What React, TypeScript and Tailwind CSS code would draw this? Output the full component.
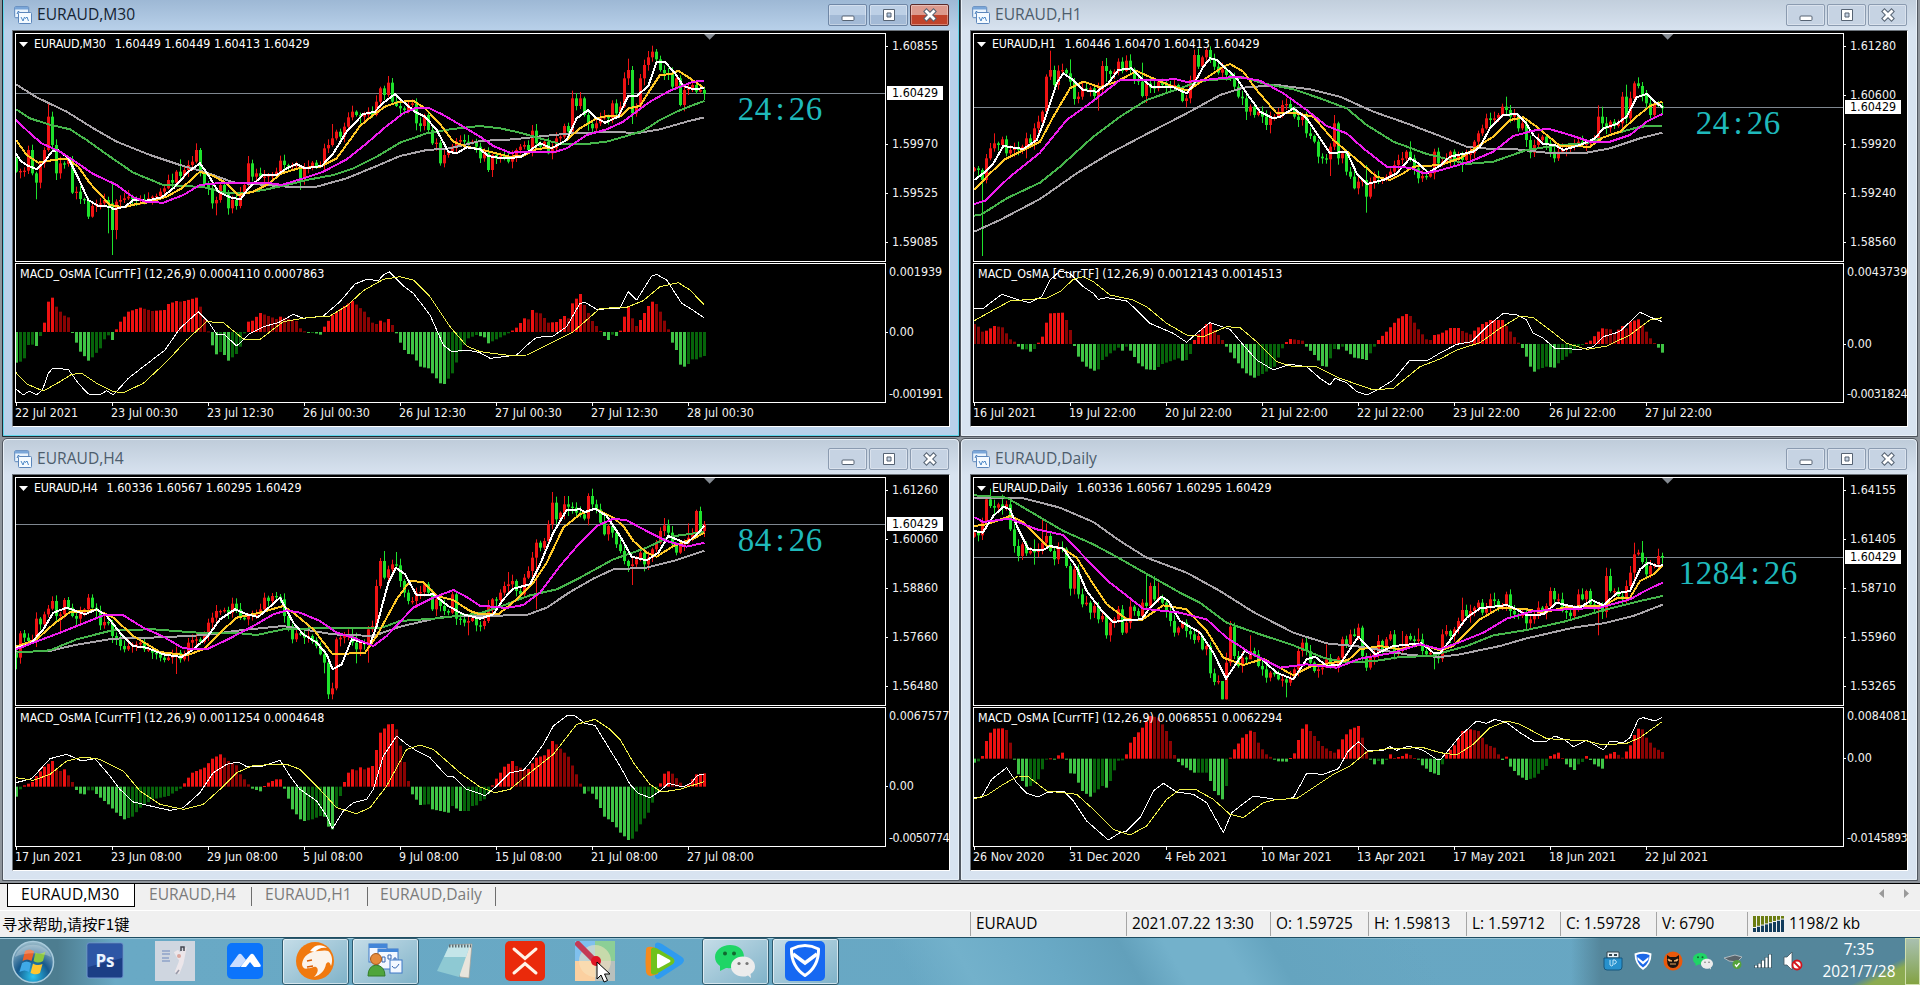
import type { ReactNode } from "react"

type Wick = [number, number, number]

type Chart = {
  symbol: string
  quote: string
  macd: string
  active?: boolean
  // origin of the price pane and of the MACD pane, in thirds of a pixel
  x: number
  y: number
  priceLine: number
  zero: number
  countdown: string
  prices: string[]
  scale: [string, string]
  dates: string[]
  closes: number[]
  open: number
  wicks: Wick[]
  averages: { white: string; gold: string; magenta: string; green: string; gray: string }
  histogram: string
  macdLine: string
  signalLine: string
}

const CHARTS: Chart[] = [
  {
    symbol: "EURAUD,M30",
    quote: "1.60449 1.60449 1.60413 1.60429",
    macd: "0.0004110 0.0007863",
    active: true,
    x: 48,
    y: 102,
    priceLine: 280,
    zero: 996,
    countdown: "24:26",
    prices: ["1.60855", "", "1.59970", "1.59525", "1.59085"],
    scale: ["0.001939", "-0.001991"],
    dates: ["22 Jul 2021", "23 Jul 00:30", "23 Jul 12:30", "26 Jul 00:30", "26 Jul 12:30", "27 Jul 00:30", "27 Jul 12:30", "28 Jul 00:30"],
    open: 475,
    closes: [
      515, 513, 512, 450, 520, 548, 490, 450, 350, 435, 520, 490, 492, 480, 578, 575, 597, 600, 650, 618, 612, 610, 600, 610, 690,
      605, 600, 595, 590, 598, 600, 598, 605, 595, 590, 588, 575, 565, 540, 548, 515, 528, 510, 495, 485, 450, 520, 555, 565, 610,
      600, 555, 580, 625, 600, 618, 580, 555, 490, 530, 520, 530, 530, 525, 525, 515, 482, 495, 500, 495, 495, 535, 505, 500, 488,
      500, 495, 445, 435, 415, 395, 410, 380, 352, 335, 345, 350, 345, 335, 345, 305, 265, 285, 248, 305, 318, 325, 330, 315, 310,
      370, 378, 345, 390, 430, 428, 490, 465, 455, 440, 425, 420, 425, 430, 425, 440, 475, 460, 510, 465, 475, 468, 470, 485, 470,
      450, 440, 435, 450, 392, 430, 440, 425, 460, 445, 415, 410, 378, 395, 295, 318, 295, 345, 372, 385, 370, 355, 350, 355, 310,
      340, 320, 235, 210, 340, 320, 235, 195, 172, 155, 178, 210, 220, 222, 260, 235, 315, 270, 265, 255, 275, 270, 282,
    ],
    wicks: [[5, 515, 598], [8, 312, 455], [9, 335, 450], [23, 590, 700], [24, 545, 765], [25, 598, 718], [41, 478, 545], [45, 430, 490], [50, 590, 646], [58, 468, 560], [71, 495, 570], [79, 372, 440], [93, 228, 292], [106, 420, 497], [139, 272, 385], [153, 176, 255], [154, 198, 372], [159, 137, 185]],
    averages: {
      white: "48,460 62,483 85,498 110,507 130,490 155,455 175,450 205,475 235,535 265,600 295,618 330,620 340,628 375,620 400,600 440,602 485,592 520,565 565,515 600,490 625,525 655,575 690,592 722,598 745,565 790,525 830,525 860,505 890,492 915,505 965,498 1000,460 1040,395 1090,342 1125,335 1150,308 1185,282 1215,310 1245,335 1275,350 1310,390 1345,455 1370,460 1400,442 1440,448 1465,468 1500,474 1560,472 1585,455 1620,430 1655,445 1700,420 1730,355 1765,330 1785,352 1815,368 1855,350 1885,287 1910,288 1945,258 1970,185 1995,186 2025,220 2050,258 2080,268 2112,264",
      gold: "48,420 80,465 115,488 160,480 200,476 235,500 270,550 330,615 370,622 410,612 450,606 500,590 545,565 600,515 640,528 680,550 715,585 760,575 800,555 845,520 895,505 960,500 1010,475 1050,420 1080,378 1120,345 1155,320 1195,306 1240,302 1275,325 1320,372 1360,425 1400,440 1440,448 1490,460 1530,470 1570,468 1610,447 1660,442 1700,420 1740,385 1790,355 1825,347 1860,350 1885,325 1920,318 1950,270 1980,225 2015,222 2035,212 2070,235 2113,265",
      magenta: "48,360 90,400 125,430 180,455 230,488 280,522 350,555 400,592 440,606 490,608 550,585 600,555 650,550 720,550 800,548 845,555 910,535 970,515 1040,478 1100,430 1160,378 1210,340 1250,323 1285,323 1330,345 1390,380 1440,410 1480,438 1530,458 1600,455 1660,457 1700,445 1760,405 1820,388 1870,365 1900,342 1950,305 2010,272 2080,245 2113,243",
      green: "48,328 90,355 145,373 210,388 260,420 330,470 400,518 490,555 560,558 620,563 670,578 740,578 800,568 860,555 930,538 1000,525 1060,505 1130,470 1200,428 1280,400 1350,388 1440,378 1500,385 1560,398 1620,415 1680,432 1750,433 1820,425 1880,408 1930,392 1980,360 2030,335 2080,315 2113,303",
      gray: "48,253 110,292 200,335 280,385 350,425 450,465 540,495 620,518 700,547 760,552 860,560 950,560 1040,535 1130,498 1200,468 1280,450 1350,445 1440,423 1540,418 1660,405 1740,398 1830,397 1920,398 1980,388 2060,365 2113,352",
    },
    histogram:
      "49,1088 61,1085 73,1075 85,1035 97,1034 109,1038 121,1008 133,968 145,905 157,893 169,920 181,935 193,947 205,952 217,998 229,1028 241,1055 265,1082 277,1072 301,1045 313,1018 325,1006 337,1020 349,988 361,965 385,935 421,923 457,933 493,930 505,912 529,903 541,905 553,903 589,893 601,920 625,994 637,1036 649,1063 661,1056 673,1065 685,1082 709,1062 721,1040 733,1000 745,965 757,962 781,939 829,957 841,950 889,963 901,985 913,994 925,999 937,997 961,1004 973,980 997,945 1033,918 1057,903 1093,935 1117,968 1129,972 1141,962 1153,967 1165,957 1177,975 1189,1000 1201,1028 1213,1050 1225,1062 1237,1063 1261,1100 1285,1105 1321,1150 1333,1152 1357,1120 1381,1055 1405,1015 1429,1005 1453,1012 1465,1030 1489,1018 1525,1000 1549,983 1573,955 1585,958 1597,930 1609,938 1621,940 1645,968 1669,966 1693,948 1705,955 1717,910 1741,882 1753,915 1777,963 1801,993 1813,1008 1825,1020 1837,1004 1849,1008 1861,992 1873,950 1885,921 1897,955 1909,978 1921,960 1945,918 1957,905 1969,912 1981,935 1993,962 2005,988 2017,1028 2029,1050 2041,1094 2053,1100 2065,1092 2077,1078 2089,1078 2101,1072 2113,1068",
    macdLine:
      "48,1167 70,1185 88,1173 110,1185 128,1168 145,1120 158,1105 205,1108 235,1150 265,1182 300,1184 320,1172 340,1185 385,1135 430,1100 495,1050 540,985 595,935 625,965 650,1003 675,1005 710,1038 750,1000 790,980 835,968 880,943 910,955 970,948 1020,905 1065,852 1100,838 1135,842 1150,825 1168,815 1210,858 1240,880 1290,945 1330,1035 1355,1055 1400,1050 1440,1058 1470,1075 1550,1065 1585,1032 1610,1012 1660,1008 1700,980 1740,910 1755,907 1790,928 1860,925 1885,875 1910,900 1955,828 1970,823 2000,840 2045,910 2075,928 2112,953",
    signalLine:
      "48,1118 80,1152 130,1173 180,1145 215,1123 245,1120 290,1150 340,1175 370,1178 430,1150 500,1085 560,1020 620,965 670,968 730,1017 780,1018 850,965 920,953 990,948 1040,918 1090,872 1150,838 1200,830 1240,840 1290,890 1350,980 1400,1038 1440,1055 1540,1068 1580,1065 1650,1030 1720,995 1760,960 1800,925 1880,922 1930,902 1980,860 2035,848 2070,870 2112,914",
  },
  {
    symbol: "EURAUD,H1",
    quote: "1.60446 1.60470 1.60413 1.60429",
    macd: "0.0012143 0.0014513",
    x: 42,
    y: 102,
    priceLine: 322,
    zero: 1032,
    countdown: "24:26",
    prices: ["1.61280", "1.60600", "1.59920", "1.59240", "1.58560"],
    scale: ["0.0043739", "-0.0031824"],
    dates: ["16 Jul 2021", "19 Jul 22:00", "20 Jul 22:00", "21 Jul 22:00", "22 Jul 22:00", "23 Jul 22:00", "26 Jul 22:00", "27 Jul 22:00"],
    open: 512,
    closes: [
      505, 510, 540, 475, 445, 430, 435, 418, 460, 450, 445, 450, 440, 415, 430, 385, 365, 335, 230, 210, 255, 212, 210, 220, 245,
      297, 290, 265, 268, 265, 288, 270, 198, 213, 222, 215, 185, 213, 182, 208, 238, 245, 288, 250, 262, 265, 245, 255, 258, 260,
      255, 265, 303, 295, 240, 165, 200, 172, 150, 175, 200, 218, 208, 225, 230, 260, 290, 295, 335, 320, 345, 335, 350, 375, 355,
      350, 335, 315, 312, 325, 350, 360, 350, 400, 408, 425, 470, 475, 478, 440, 370, 475, 460, 515, 530, 565, 545, 540, 590, 545,
      530, 535, 535, 530, 515, 495, 480, 475, 455, 475, 505, 535, 528, 530, 520, 455, 490, 485, 478, 455, 480, 465, 480, 465, 460,
      425, 400, 385, 355, 360, 355, 345, 320, 330, 350, 345, 385, 370, 420, 458, 435, 420, 410, 430, 455, 475, 455, 450, 445, 440,
      430, 425, 435, 430, 425, 415, 350, 370, 385, 365, 378, 370, 290, 355, 295, 250, 258, 285, 310, 345, 310, 318, 325,
    ],
    wicks: [[2, 505, 768], [5, 400, 455], [13, 398, 475], [19, 152, 240], [24, 178, 260], [31, 248, 332], [33, 174, 245], [42, 188, 292], [58, 145, 182], [68, 285, 360], [74, 335, 400], [89, 430, 528], [90, 345, 450], [98, 495, 638], [109, 424, 485], [122, 455, 516], [133, 290, 345], [156, 316, 420], [157, 320, 392], [163, 254, 370], [166, 232, 265]],
    averages: {
      white: "43,540 70,520 100,490 130,438 190,447 230,420 250,370 290,250 310,220 340,240 370,270 410,275 445,250 475,210 515,205 550,240 575,260 640,262 680,280 700,255 730,200 750,175 770,180 830,235 860,280 900,335 940,355 960,350 1000,325 1040,355 1080,415 1110,460 1160,455 1190,520 1222,552 1270,540 1310,520 1350,475 1375,490 1405,518 1440,497 1470,470 1540,455 1560,440 1590,385 1630,345 1670,342 1695,365 1720,405 1750,432 1785,435 1810,450 1860,435 1905,415 1930,385 1970,372 2000,350 2030,292 2060,282 2085,305 2108,322",
      gold: "43,570 90,520 135,478 190,450 240,425 280,350 330,265 370,245 420,262 470,245 530,213 590,240 640,260 685,272 730,240 790,200 810,192 850,215 890,270 950,340 1000,338 1060,350 1120,420 1180,470 1250,530 1290,540 1330,520 1360,500 1440,495 1500,475 1560,435 1600,410 1650,360 1690,352 1730,380 1800,438 1890,440 1930,412 1980,395 2030,350 2070,318 2107,305",
      magenta: "43,612 75,602 150,530 240,458 320,360 390,310 480,240 560,240 650,238 680,246 760,237 830,230 900,242 970,280 1040,330 1100,378 1160,400 1210,445 1280,500 1350,503 1390,520 1440,511 1530,485 1600,455 1660,408 1720,392 1765,386 1830,405 1890,425 1950,425 2010,405 2060,365 2107,342",
      green: "43,647 65,643 140,595 240,548 300,500 400,410 480,350 560,300 660,265 720,243 850,232 910,250 1000,268 1080,295 1160,325 1220,375 1300,425 1400,462 1440,472 1520,492 1600,485 1700,450 1800,435 1880,430 1950,405 2040,380 2107,377",
      gray: "43,695 120,660 240,597 350,520 450,460 560,402 680,340 780,285 850,263 950,255 1050,268 1140,290 1240,335 1340,370 1440,408 1520,440 1560,445 1670,448 1760,458 1880,458 1950,445 2040,415 2107,398",
    },
    histogram:
      "43,972 55,980 67,995 79,992 103,978 127,982 139,1000 151,1018 163,1025 175,1040 187,1048 199,1048 211,1055 223,1047 235,1028 247,1010 259,968 271,940 307,938 319,960 331,990 343,1038 355,1070 379,1100 403,1112 415,1108 427,1080 451,1060 475,1043 487,1052 499,1040 511,1052 535,1090 559,1108 583,1110 607,1092 655,1075 667,1082 679,1080 691,1062 703,1020 715,1003 727,985 739,972 751,970 763,990 787,1020 799,1040 823,1075 859,1120 883,1133 907,1122 943,1100 967,1045 979,1026 991,1017 1015,1020 1027,1022 1039,1040 1063,1065 1087,1098 1099,1100 1111,1075 1123,1047 1135,1048 1147,1040 1159,1052 1183,1073 1207,1077 1219,1080 1231,1060 1243,1040 1255,1020 1279,995 1315,955 1339,942 1351,948 1375,988 1399,1018 1411,1020 1423,1005 1435,1003 1447,998 1471,984 1495,984 1507,993 1531,1003 1543,992 1567,972 1591,960 1627,960 1639,978 1675,1028 1687,1044 1699,1070 1711,1100 1723,1115 1735,1108 1759,1100 1783,1103 1795,1090 1831,1060 1855,1040 1867,1034 1891,1022 1915,995 1927,985 1951,988 1963,1000 1987,978 1999,985 2011,965 2035,958 2047,975 2071,1015 2083,1029 2095,1043 2107,1058",
    macdLine:
      "43,927 70,925 125,883 170,898 210,908 245,890 270,840 300,813 330,820 370,860 400,880 415,898 440,893 500,903 530,930 570,970 640,1000 680,1027 710,1000 750,968 810,988 850,1035 890,1080 940,1110 990,1093 1040,1100 1080,1135 1110,1155 1125,1135 1160,1148 1190,1175 1220,1185 1260,1165 1300,1140 1350,1080 1400,1083 1440,1059 1490,1033 1535,1025 1580,980 1630,940 1670,945 1700,960 1720,1000 1750,1015 1785,1045 1860,1048 1900,1040 1930,1010 1970,998 1985,990 2000,975 2040,937 2080,955 2107,965",
    signalLine:
      "43,962 100,930 150,903 210,898 260,895 300,875 340,838 370,830 400,845 450,885 520,900 560,920 620,970 680,1005 730,1010 800,980 840,983 890,1025 950,1085 1000,1100 1070,1100 1140,1135 1240,1170 1300,1165 1380,1100 1440,1077 1490,1050 1560,1028 1620,985 1680,948 1720,953 1770,990 1820,1030 1880,1048 1940,1038 2010,1005 2070,960 2107,953",
  },
  {
    symbol: "EURAUD,H4",
    quote: "1.60336 1.60567 1.60295 1.60429",
    macd: "0.0011254 0.0004648",
    x: 48,
    y: 126,
    priceLine: 265,
    zero: 1052,
    countdown: "84:26",
    prices: ["1.61260", "1.60060", "1.58860", "1.57660", "1.56480"],
    scale: ["0.0067577", "-0.0050774"],
    dates: ["17 Jun 2021", "23 Jun 08:00", "29 Jun 08:00", "5 Jul 08:00", "9 Jul 08:00", "15 Jul 08:00", "21 Jul 08:00", "27 Jul 08:00"],
    open: 645,
    closes: [
      665, 592, 605, 615, 612, 548, 565, 535, 518, 495, 540, 535, 492, 515, 540, 548, 530, 520, 485, 515, 525, 568, 558, 560, 600,
      610, 630, 640, 630, 625, 625, 620, 640, 640, 650, 655, 665, 672, 665, 660, 650, 670, 655, 620, 612, 610, 618, 595, 560, 545,
      525, 525, 522, 530, 503, 520, 545, 550, 540, 535, 535, 520, 485, 495, 480, 482, 490, 540, 570, 610, 592, 595, 605, 600, 612,
      630, 655, 680, 775, 757, 610, 605, 600, 595, 620, 640, 620, 625, 580, 570, 450, 375, 425, 400, 385, 388, 435, 470, 495, 495,
      470, 468, 445, 470, 520, 490, 510, 525, 530, 475, 548, 550, 560, 555, 545, 568, 570, 555, 510, 490, 492, 470, 450, 445, 435,
      465, 475, 425, 405, 365, 320, 335, 315, 265, 200, 250, 230, 205, 212, 215, 230, 235, 248, 180, 205, 220, 260, 295, 270, 290,
      325, 345, 375, 390, 385, 370, 350, 385, 365, 340, 320, 285, 268, 290, 325, 350, 325, 322, 305, 295, 225, 285, 265,
    ],
    wicks: [[0, 640, 700], [11, 528, 588], [18, 474, 535], [40, 632, 714], [54, 485, 545], [62, 470, 530], [66, 474, 500], [77, 640, 712], [79, 740, 790], [85, 590, 682], [88, 570, 680], [91, 366, 458], [92, 345, 430], [95, 348, 398], [113, 540, 598], [123, 408, 470], [130, 310, 520], [134, 168, 280], [137, 180, 250], [138, 180, 240], [144, 158, 215], [154, 365, 447], [152, 320, 385], [162, 246, 300], [168, 262, 325], [171, 212, 290]],
    averages: {
      white: "48,635 90,625 130,580 160,530 200,515 255,535 290,520 320,540 360,590 400,630 440,635 490,655 545,663 580,640 620,605 660,550 705,520 740,535 775,543 840,485 880,560 910,595 950,620 980,655 998,700 1025,685 1055,610 1110,625 1130,570 1165,440 1188,395 1215,415 1250,478 1300,475 1345,510 1390,535 1440,548 1480,535 1510,490 1540,458 1590,445 1620,385 1660,290 1700,222 1740,220 1755,228 1785,218 1820,240 1860,300 1895,362 1940,373 1975,350 2005,300 2060,322 2090,295 2113,270",
      gold: "48,632 110,610 160,565 210,528 290,522 340,545 400,600 480,648 560,658 610,640 660,590 710,545 780,530 850,510 880,530 940,580 998,655 1095,650 1130,600 1190,490 1230,435 1270,438 1310,480 1360,492 1410,525 1440,535 1495,535 1550,490 1600,440 1640,380 1690,275 1740,235 1785,218 1840,245 1870,270 1900,315 1940,350 1970,362 2020,330 2080,308 2113,290",
      magenta: "48,640 100,620 180,590 250,562 310,538 370,538 430,575 490,602 550,637 620,640 680,612 760,570 820,535 860,523 900,530 960,555 1010,590 1060,605 1120,630 1160,600 1240,515 1300,485 1360,462 1400,483 1440,509 1520,516 1570,507 1620,470 1680,390 1740,320 1790,270 1840,248 1880,253 1940,285 2000,315 2060,332 2113,320",
      green: "48,650 150,643 230,610 340,582 460,580 620,592 700,590 770,597 850,580 1000,575 1140,577 1200,555 1300,548 1370,540 1440,532 1500,512 1590,478 1670,460 1740,425 1840,370 1940,335 2010,302 2113,288",
      gray: "48,648 150,645 220,628 340,608 480,604 620,597 720,583 850,570 1000,595 1120,600 1200,572 1330,542 1440,540 1580,537 1640,515 1710,468 1780,428 1840,400 1940,395 2020,375 2113,344",
    },
    histogram:
      "49,1082 61,1060 73,1048 97,1038 109,1020 133,992 157,975 169,1000 181,1005 193,1000 205,1018 217,1038 229,1062 241,1073 253,1075 265,1063 277,1063 301,1085 325,1105 349,1130 373,1150 397,1142 421,1115 457,1090 505,1080 541,1058 553,1042 565,1025 577,1010 613,995 637,968 661,955 685,975 709,988 721,1015 745,1045 757,1058 781,1066 793,1050 805,1040 829,1030 841,1030 853,1058 865,1088 877,1120 901,1150 913,1155 937,1150 961,1140 973,1142 985,1172 997,1180 1009,1115 1021,1080 1033,1038 1045,1010 1057,1000 1069,1003 1081,994 1093,1000 1117,990 1129,942 1141,890 1165,865 1177,864 1189,880 1213,978 1225,1035 1237,1075 1261,1107 1285,1105 1297,1120 1345,1130 1357,1110 1381,1125 1405,1125 1417,1110 1429,1108 1441,1095 1453,1090 1465,1075 1477,1048 1489,1028 1513,992 1537,975 1549,990 1573,1000 1585,999 1609,965 1633,958 1645,940 1657,915 1669,925 1681,938 1705,962 1729,1015 1741,1043 1753,1073 1765,1066 1777,1073 1789,1090 1813,1142 1837,1158 1861,1190 1885,1212 1897,1208 1921,1165 1945,1130 1969,1070 1981,1042 1993,1013 2005,1006 2017,1013 2041,1040 2053,1050 2065,1045 2089,1015 2113,1012",
    macdLine:
      "48,1040 95,1028 150,968 200,955 245,975 285,968 330,1020 360,1060 400,1098 460,1112 510,1123 550,1115 600,1070 640,1010 680,985 715,978 740,992 780,993 840,973 870,1020 900,1060 950,1095 980,1140 997,1178 1030,1125 1060,1100 1100,1090 1120,1060 1150,960 1190,900 1220,925 1250,945 1290,965 1340,1020 1360,1022 1400,1060 1440,1073 1455,1080 1490,1050 1530,1010 1570,1003 1590,980 1630,925 1660,870 1702,838 1725,840 1755,862 1785,868 1820,925 1860,990 1890,1045 1915,1072 1950,1085 1980,1065 2005,1042 2050,1053 2075,1040 2092,1018 2112,1015",
    signalLine:
      "48,1025 100,1033 150,1015 200,975 250,963 300,970 370,1005 420,1065 480,1105 550,1120 610,1105 660,1060 710,1010 760,988 860,985 900,1000 950,1050 1010,1115 1070,1133 1110,1115 1160,1050 1220,940 1260,927 1300,940 1380,1010 1440,1053 1485,1070 1530,1060 1590,1010 1660,955 1730,865 1785,850 1830,880 1860,910 1900,980 1950,1045 1985,1068 2040,1060 2112,1037",
  },
  {
    symbol: "EURAUD,Daily",
    quote: "1.60336 1.60567 1.60295 1.60429",
    macd: "0.0068551 0.0062294",
    x: 42,
    y: 126,
    priceLine: 364,
    zero: 968,
    countdown: "1284:26",
    prices: ["1.64155", "1.61405", "1.58710", "1.55960", "1.53265"],
    scale: ["0.0084081", "-0.0145893"],
    dates: ["26 Nov 2020", "31 Dec 2020", "4 Feb 2021", "10 Mar 2021", "13 Apr 2021", "17 May 2021", "18 Jun 2021", "22 Jul 2021"],
    open: 302,
    closes: [
      290, 298, 255, 190, 210, 215, 205, 215, 205, 280, 330, 360, 325, 352, 345, 348, 340, 320, 300, 345, 370, 335, 338, 390, 458,
      400, 475, 505, 500, 530, 510, 550, 540, 598, 560, 550, 520, 590, 560, 512, 525, 540, 500, 510, 450, 490, 485, 500, 525, 555,
      590, 575, 560, 585, 595, 612, 600, 640, 630, 712, 738, 735, 790, 680, 572, 660, 690, 665, 670, 645, 655, 690, 700, 725, 710,
      715, 730, 730, 740, 725, 700, 645, 620, 645, 680, 705, 700, 695, 670, 690, 690, 665, 610, 625, 595, 600, 575, 660, 695, 665,
      650, 615, 640, 610, 595, 650, 645, 635, 600, 610, 615, 610, 645, 655, 650, 660, 668, 595, 585, 600, 580, 555, 522, 540, 525,
      515, 500, 530, 515, 490, 495, 515, 510, 475, 525, 535, 540, 530, 562, 550, 540, 515, 530, 510, 465, 490, 490, 525, 530, 540,
      520, 475, 490, 465, 505, 520, 515, 528, 420, 465, 465, 480, 490, 450, 410, 355, 350, 378, 415, 390, 385, 360, 365,
    ],
    wicks: [[4, 158, 216], [7, 176, 236], [15, 310, 386], [17, 248, 355], [18, 262, 330], [33, 545, 608], [43, 415, 520], [44, 440, 500], [45, 420, 495], [46, 440, 500], [62, 735, 790], [63, 650, 790], [64, 555, 690], [69, 598, 665], [78, 725, 784], [88, 625, 690], [96, 563, 612], [107, 585, 650], [111, 577, 622], [115, 650, 700], [122, 485, 570], [133, 467, 525], [145, 456, 505], [156, 505, 598], [158, 395, 545], [159, 398, 470], [165, 320, 430], [167, 315, 385], [171, 338, 400]],
    averages: {
      white: "43,285 68,290 100,240 130,212 150,220 175,280 205,340 250,342 270,330 310,338 350,395 380,465 430,530 460,558 500,552 545,550 570,515 605,482 625,495 660,555 720,590 760,650 798,728 830,680 855,645 900,665 950,710 1000,730 1040,670 1065,662 1100,690 1140,685 1170,640 1195,602 1225,635 1245,655 1300,630 1385,622 1420,650 1440,652 1480,600 1520,545 1560,517 1640,507 1670,520 1700,538 1750,535 1790,500 1820,508 1860,515 1895,492 1930,508 1970,472 2010,465 2040,400 2065,380 2090,390 2108,388",
      gold: "43,270 80,265 150,240 190,258 260,330 310,338 350,365 400,445 440,505 500,550 545,552 610,508 680,520 740,585 790,665 850,687 910,668 1000,718 1050,692 1120,680 1165,672 1200,640 1260,630 1320,640 1385,625 1440,643 1480,630 1510,600 1560,550 1620,515 1700,520 1750,530 1810,515 1870,510 1930,510 1970,487 2010,485 2040,435 2080,415 2108,390",
      magenta: "43,243 70,258 150,248 230,280 310,297 380,370 450,440 550,518 660,530 740,550 800,605 870,650 960,695 1040,685 1130,695 1200,668 1300,650 1380,625 1440,640 1490,622 1570,590 1640,548 1720,525 1820,520 1920,515 2010,490 2060,462 2108,440",
      green: "43,178 140,185 230,238 310,285 400,325 480,368 580,425 660,470 720,500 800,560 900,595 1000,628 1090,665 1150,678 1240,676 1320,663 1420,660 1440,652 1520,630 1600,598 1700,582 1820,555 1940,520 2040,495 2108,480",
      gray: "43,186 190,187 300,215 400,258 480,315 560,365 680,410 780,465 880,528 1000,590 1100,622 1200,632 1280,645 1350,657 1440,663 1500,655 1620,630 1700,607 1840,575 1930,562 2020,540 2108,506",
    },
    histogram:
      "43,980 55,976 67,960 79,915 91,890 103,878 127,877 139,882 151,920 163,970 175,1015 187,1035 199,1052 211,1050 235,1030 247,1000 259,970 271,967 283,971 295,958 307,950 319,970 331,1012 343,1013 355,1040 367,1065 391,1082 403,1070 427,1050 439,1055 451,1035 463,1003 475,974 487,973 499,955 511,920 523,903 547,875 571,840 595,845 607,865 619,885 631,915 643,957 655,978 667,988 703,1010 739,1010 751,1035 763,1065 787,1090 799,1050 811,965 823,940 847,905 871,884 883,888 895,920 907,940 919,955 943,970 955,976 979,977 991,966 1003,952 1015,912 1027,878 1039,865 1051,885 1063,900 1087,930 1111,945 1123,950 1135,940 1147,910 1171,880 1195,870 1207,905 1219,945 1231,970 1243,985 1255,975 1267,985 1279,972 1291,955 1303,966 1327,960 1339,953 1351,957 1363,966 1375,970 1387,988 1411,1008 1435,1017 1447,985 1459,955 1483,928 1507,885 1531,880 1555,885 1579,925 1603,935 1615,955 1627,972 1639,962 1651,992 1675,1018 1699,1032 1723,1025 1759,990 1771,960 1795,950 1807,966 1819,985 1843,1002 1855,985 1867,978 1879,960 1891,972 1903,985 1927,998 1939,958 1963,948 1987,965 2011,928 2023,897 2035,878 2047,880 2059,905 2083,935 2107,948",
    macdLine:
      "43,1085 65,1083 95,1030 140,995 170,1040 200,1072 235,1083 260,1070 310,1065 340,1095 380,1155 445,1212 480,1190 500,1185 540,1145 580,1065 610,1042 650,1068 700,1075 740,1100 790,1190 815,1130 880,1080 960,1092 1000,1085 1040,1012 1090,1015 1135,998 1165,945 1195,917 1225,945 1270,943 1290,932 1310,943 1345,930 1390,943 1430,970 1440,972 1455,955 1500,900 1550,855 1580,862 1605,850 1640,860 1680,890 1725,918 1760,915 1785,900 1815,912 1840,932 1880,912 1930,942 1950,915 1990,920 2010,905 2035,850 2050,845 2085,855 2105,845",
    signalLine:
      "43,1088 80,1078 130,1045 175,1020 205,1022 260,1065 350,1075 400,1120 460,1180 510,1197 560,1170 620,1090 660,1060 710,1062 760,1090 810,1135 850,1145 910,1100 950,1090 1010,1088 1060,1055 1120,1015 1170,990 1220,948 1280,938 1390,935 1440,950 1490,957 1540,925 1590,875 1640,855 1680,865 1760,908 1880,915 1930,927 2000,922 2040,905 2105,858",
  },
]

// y of a "x,y x,y" series at x, straight between its points
function valueAt(points: number[][], x: number) {
  const next = points.findIndex((p) => p[0] >= x)
  if (next === -1) return points[points.length - 1][1]
  if (next === 0) return points[0][1]
  const [x0, y0] = points[next - 1]
  const [x1, y1] = points[next]
  return y0 + ((y1 - y0) * (x - x0)) / (x1 - x0)
}

function Candles({ chart }: { chart: Chart }) {
  return (
    <g>
      {chart.closes.map((close, i) => {
        const open = i === 0 ? chart.open : chart.closes[i - 1]
        const color = close <= open ? "#f01414" : "#1ee22c"
        const top = Math.min(open, close)
        const height = Math.max(Math.abs(open - close), 4)
        const wick = chart.wicks.find((w) => w[0] === i)
        const high = wick ? wick[1] : top - 4 - ((i * 37) % 17)
        const low = wick ? wick[2] : top + height + 3 + ((i * 53) % 19)
        const x = chart.x + i * 12
        return (
          <g key={i} fill={color}>
            <rect x={x} y={high} width={3} height={Math.max(low - high, 3)} />
            <rect x={x - 3} y={top} width={9} height={height} />
          </g>
        )
      })}
    </g>
  )
}

function Histogram({ chart }: { chart: Chart }) {
  const points = chart.histogram.split(" ").map((p) => p.split(",").map(Number))
  const values = chart.closes.map((_, i) => valueAt(points, chart.x + 1 + i * 12))
  return (
    <g>
      {values.map((y, i) => {
        const rising = i > 0 && y <= values[i - 1]
        const above = y < chart.zero
        const color = above ? (rising ? "#ee1111" : "#8a0303") : rising ? "#06640a" : "#3fc445"
        return (
          <rect
            key={i}
            x={chart.x + i * 12 - 3}
            y={Math.min(y, chart.zero)}
            width={9}
            height={Math.max(Math.abs(y - chart.zero), 3)}
            fill={color}
          />
        )
      })}
    </g>
  )
}

function PricePane({ chart }: { chart: Chart }) {
  const { averages } = chart
  return (
    <div className="relative h-[229px] border border-white">
      <svg className="block h-[227px] w-[869px]" viewBox={`${chart.x} ${chart.y} 2607 681`}>
        <rect x={chart.x} y={chart.priceLine - 1} width={2607} height={3} fill="#7f8790" />
        <Candles chart={chart} />
        <g fill="none" strokeWidth="6" strokeLinejoin="round" shapeRendering="crispEdges">
          <polyline points={averages.gray} stroke="#a9a5a9" />
          <polyline points={averages.green} stroke="#46b54b" />
          <polyline points={averages.gold} stroke="#ffc826" />
          <polyline points={averages.white} stroke="#ffffff" />
          <polyline points={averages.magenta} stroke="#ee1cee" />
        </g>
        <path d={`M${chart.x + 2064} ${chart.y}h34l-17 17z`} fill="#858b92" />
      </svg>
      <div className="absolute left-[3px] top-[2px] flex h-[16px] items-center whitespace-pre text-white">
        <svg className="mr-[6px] h-[5px] w-[9px]" viewBox="0 0 9 5">
          <path d="M0 0h9L4.500 5z" fill="#fff" />
        </svg>
        <span className="mr-[9px] tracking-[-0.25px]">{chart.symbol}</span>
        <span>{chart.quote}</span>
      </div>
      <div
        className="absolute left-[664px] flex h-[32px] w-[200px] items-center justify-center font-['Liberation_Serif','Noto_Sans_CJK_SC',serif] text-[33px] text-[#1fb9bb]"
        style={{ top: (chart.priceLine - chart.y) / 3 }}
      >
        {chart.countdown.split("").map((c, i) => (
          <span key={i} className="w-[17px] text-center">{c}</span>
        ))}
      </div>
    </div>
  )
}

function MacdPane({ chart }: { chart: Chart }) {
  return (
    <div className="relative mt-px h-[140px] border border-white">
      <svg className="block h-[138px] w-[869px]" viewBox={`${chart.x} ${chart.y + 690} 2607 414`}>
        <Histogram chart={chart} />
        <g fill="none" strokeWidth="3" strokeLinejoin="round" shapeRendering="crispEdges">
          <polyline points={chart.macdLine} stroke="#ffffff" />
          <polyline points={chart.signalLine} stroke="#f2f24a" />
        </g>
      </svg>
      <div className="absolute left-[4px] top-[2px] flex h-[16px] items-center whitespace-pre tracking-[0.04px] text-white">
        MACD_OsMA [CurrTF] (12,26,9) {chart.macd}
      </div>
    </div>
  )
}

function PriceScale({ chart }: { chart: Chart }) {
  const line = (chart.priceLine - chart.y + 102) / 3 - 31
  const zero = (chart.zero - chart.y + 102) / 3 - 31
  return (
    <div className="relative h-full w-[63px] overflow-hidden">
      <div className="-mt-[9px] flex flex-col">
        {chart.prices.map((price, i) => (
          <div key={i} className="flex h-[49px] items-center">
            {price && <span className="h-px w-[2px] bg-white" />}
            <span className="ml-[4px]">{price}</span>
          </div>
        ))}
      </div>
      <div className="absolute left-[3px] top-[233px] flex h-[16px] items-center">{chart.scale[0]}</div>
      <div className="absolute left-0 flex h-[16px] items-center" style={{ top: zero - 8 }}>
        <span className="mr-px h-px w-[2px] bg-white" />
        0.00
      </div>
      <div className="absolute left-[3px] top-[355px] flex h-[16px] items-center tracking-[-0.4px]">{chart.scale[1]}</div>
      <div
        className="absolute left-px flex h-[14px] w-[56px] items-center bg-white pl-[5px] text-black"
        style={{ top: line - 7 }}
      >
        1.60429
      </div>
    </div>
  )
}

function WindowIcon() {
  return (
    <svg className="h-[18px] w-[18px]" viewBox="0 0 18 18">
      <rect x="0.700" y="0.700" width="14" height="11" rx="1" fill="#eaf4fd" stroke="#5b86bb" />
      <path d="M1 1h13v2.500H1z" fill="#7aa6d8" />
      <path d="M3 8l1.500-3 1.500 3 1.500-2" fill="none" stroke="#3c76b8" />
      <rect x="4.500" y="6.500" width="13" height="11" rx="1" fill="#f4faff" stroke="#5b86bb" />
      <path d="M7 11l2 4 1.500-4 1 1.500 1.500-1.500 1.500 4" fill="none" stroke="#4b87c6" />
    </svg>
  )
}

function WindowButton({ close, active, children }: { close?: boolean; active?: boolean; children: ReactNode }) {
  const look = !active
    ? "border-[#8b9bb0] bg-[#c6d3e3]"
    : close
      ? "border-[#5a2a2a] bg-linear-to-b from-[#dc9a8e] from-50% to-[#c0432c] to-50%"
      : "border-[#6f87a6] bg-linear-to-b from-[#bdd0e6] from-50% to-[#a3bad6] to-50%"
  return (
    <div className={`flex h-[22px] w-[39px] items-center justify-center rounded-[2px] border shadow-[inset_0_0_0_1px_rgba(255,255,255,0.35)] ${look}`}>
      <svg className="h-[14px] w-[14px]" viewBox="0 0 14 14">{children}</svg>
    </div>
  )
}

function ChartWindow({ chart }: { chart: Chart }) {
  const { active } = chart
  return (
    <div className={`h-[443px] w-[958px] rounded-t-[5px] border ${active ? "border-[#1d2a33]" : "border-[#50565f]"}`}>
      <div
        className={`h-full rounded-t-[4px] border px-[8px] ${
          active
            ? "border-[#5fd5ea] bg-linear-to-b from-[#9ab5d2] to-[#b9d1ea] to-[35px]"
            : "border-[#e8f0f8] bg-linear-to-b from-[#bfccda] to-[#d8e3f0] to-[35px]"
        }`}
      >
        <div className="flex h-[34px] items-center pl-[2px] pt-[4px]">
          <WindowIcon />
          <span className={`ml-[5px] text-[15.6px] ${active ? "text-[#152433]" : "text-[#4d5d6c]"}`}>{chart.symbol}</span>
          <div className="ml-auto mr-px flex gap-[2px]">
            <WindowButton active={active}>
              <rect x="1" y="8" width="12" height="4.500" rx="1" fill="#fff" stroke="#566373" />
            </WindowButton>
            <WindowButton active={active}>
              <path d="M1.500 1.500h11v11h-11zM5 5v4h4V5z" fill="#fff" stroke="#566373" fillRule="evenodd" />
            </WindowButton>
            <WindowButton close active={active}>
              <path d="M3.500 3.500l7 7M10.500 3.500l-7 7" stroke="#566373" strokeWidth="4.800" strokeLinecap="square" />
              <path d="M3.500 3.500l7 7M10.500 3.500l-7 7" stroke="#fff" strokeWidth="2.800" strokeLinecap="square" />
            </WindowButton>
          </div>
        </div>
        <div className="h-[397px] w-[938px] border border-b-white border-l-[#6d747c] border-r-white border-t-[#6d747c] bg-black">
          <div className="flex h-full font-['DejaVu_Sans_Condensed','DejaVu_Sans',sans-serif] text-[12.4px] leading-none text-[#f2f2f2]">
            <div className="ml-[2px] w-[871px] pt-[2px]">
              <PricePane chart={chart} />
              <MacdPane chart={chart} />
              <div className="flex pl-px">
                {chart.dates.map((date) => (
                  <div key={date} className="w-[96px] shrink-0 whitespace-nowrap">
                    <div className="h-[3px] w-px bg-white" />
                    <div className="-ml-px mt-px">{date}</div>
                  </div>
                ))}
              </div>
            </div>
            <PriceScale chart={chart} />
          </div>
        </div>
      </div>
    </div>
  )
}

function TabBar() {
  const tab = "mt-[3px] flex h-[19px] items-center border-r border-[#6e6e6e] pb-[3px]"
  return (
    <div className="flex h-[27px] items-start border-t border-black bg-[#f0f0f0] pl-[7px] text-[15.6px] text-[#7b7b7b]">
      <div className="flex h-[23px] w-[128px] items-center border border-t-0 border-black bg-white pl-[13px] text-black">EURAUD,M30</div>
      <div className={`${tab} w-[117px] pl-[14px]`}>EURAUD,H4</div>
      <div className={`${tab} w-[116px] pl-[13px]`}>EURAUD,H1</div>
      <div className={`${tab} w-[128px] pl-[12px]`}>EURAUD,Daily</div>
      <svg className="ml-auto mr-[11px] mt-[5px] h-[9px] w-[30px]" viewBox="0 0 30 9">
        <path d="M5 0v9L0 4.500zM25 0v9l5-4.500z" fill="#9a9a9a" />
      </svg>
    </div>
  )
}

function StatusBar() {
  const cell = "flex h-[24px] items-center border-l border-[#a5a5a5] pl-[5px]"
  return (
    <div className="flex h-[27px] items-center border-t border-white bg-[#f0f0f0] text-[15.4px] text-black">
      <div className="w-[970px] pl-[2px] font-['Noto_Sans_CJK_SC',sans-serif] text-[15.2px]">寻求帮助,请按F1键</div>
      <div className={`${cell} w-[156px]`}>EURAUD</div>
      <div className={`${cell} w-[144px]`}>2021.07.22 13:30</div>
      <div className={`${cell} w-[98px]`}>O: 1.59725</div>
      <div className={`${cell} w-[98px]`}>H: 1.59813</div>
      <div className={`${cell} w-[94px]`}>L: 1.59712</div>
      <div className={`${cell} w-[96px]`}>C: 1.59728</div>
      <div className={`${cell} w-[91px]`}>V: 6790</div>
      <div className={cell}>
        <svg className="mr-[5px] h-[16px] w-[31px]" viewBox="0 0 31 16">
          {Array.from({ length: 8 }, (_, i) => (
            <g key={i}>
              <rect x={i * 4} y="0" width="3" height={11 - i * 1.2} fill="#6b7d12" />
              <rect x={i * 4} y={12 - i * 1.2} width="3" height={4 + i * 1.2} fill="#123c5c" />
            </g>
          ))}
        </svg>
        1198/2 kb
      </div>
    </div>
  )
}

function StartOrb() {
  return (
    <svg className="h-[44px] w-[44px]" viewBox="0 0 44 44">
      <defs>
        <radialGradient id="orb" cx="50%" cy="85%" r="80%">
          <stop offset="0" stopColor="#29c5f0" />
          <stop offset="0.500" stopColor="#17598c" />
          <stop offset="1" stopColor="#8fb3c4" />
        </radialGradient>
      </defs>
      <circle cx="22" cy="22" r="20.500" fill="url(#orb)" stroke="#a9cbdc" strokeWidth="1.500" />
      <path d="M14 11c3-2 7-1.500 9 .5L20.500 21c-3-2-6-2-9 0z" fill="#e8622c" />
      <path d="M24.500 12.500c3 1.500 6 1.500 10-1L32 21c-3 2-6 2-9.500 0z" fill="#8cc63f" />
      <path d="M11 23c3-2 6-2 9 0l-2 9c-3-2-6-2-9.500 0z" fill="#3fa9e8" />
      <path d="M22 23.500c3 2 6.500 2 9.500.5L29 33c-3 2-6 1.500-9.500 0z" fill="#fdc62f" />
      <path d="M4 17a18.500 16 0 0136 0c-10-5-26-5-36 0z" fill="#fff" opacity="0.250" />
    </svg>
  )
}

function TaskButton({ boxed, children }: { boxed?: boolean; children: ReactNode }) {
  return (
    <div className="flex w-[70px] justify-center">
      <div
        className={`flex h-[47px] w-[67px] items-center justify-center ${
          boxed ? "rounded-[3px] border border-[#2f5c70] bg-linear-to-br from-[#c5dde8] to-[#7fb2c8] shadow-[inset_0_0_0_1px_rgba(255,255,255,0.6)]" : ""
        }`}
      >
        <svg className="-mt-[2px] h-[40px] w-[40px]" viewBox="0 0 40 40">{children}</svg>
      </div>
    </div>
  )
}

function WeChat() {
  return (
    <>
      <path d="M15 4C7 4 0 9 0 16c0 4 2 7 5 9v5l6-3c9 1 18-3 18-11S23 4 15 4z" fill="#1fd566" />
      <circle cx="10" cy="12.500" r="2" fill="#10692f" />
      <circle cx="19" cy="12.500" r="2" fill="#10692f" />
      <path d="M28 15.500c-7 0-12 4.500-12 10s5 10 12 10c2 0 3 0 5-1l3 2.500-.5-4c3-2 4.500-4.500 4.500-7.500 0-5.500-5-10-12-10z" fill="#ececec" />
      <circle cx="24" cy="22.500" r="1.600" fill="#777" />
      <circle cx="32" cy="22.500" r="1.600" fill="#777" />
    </>
  )
}

function TaskIcons() {
  return (
    <>
      <TaskButton>
        <rect x="2" y="2" width="36" height="35" rx="2" fill="#1b3e85" stroke="#6f95cf" />
        <path d="M3 3h34v14L3 26z" fill="#3a68bb" opacity="0.600" />
        <text x="20" y="26" textAnchor="middle" fontFamily="Open Sans" fontSize="17" fontWeight="700" fill="#eaf4ff">Ps</text>
      </TaskButton>
      <TaskButton>
        <rect width="40" height="40" fill="#cfd6e0" />
        <path d="M7 10h8M7 13h8M7 17h7M7 20h8" stroke="#8ea2c8" strokeWidth="1.500" />
        <path d="M21 10l3 5 4-3-2 10-4 10" stroke="#ece6ea" strokeWidth="5" fill="none" />
        <path d="M26 10V6h3v4" stroke="#44454f" strokeWidth="1.500" fill="none" />
        <path d="M21 33l3-4" stroke="#9a9aa8" strokeWidth="1.500" />
        <circle cx="24" cy="15" r="2" fill="#dba69d" />
      </TaskButton>
      <TaskButton>
        <rect x="2" y="2" width="36" height="36" rx="5" fill="#0b74fb" />
        <path d="M5 25l8-11q2-2.500 4 0l4 5-6 7H6q-2 0-1-1z" fill="#c9ddff" />
        <path d="M16 25l9-11q2-2.500 4 0l6 9q2 3-1 3h-5l-4-5-4 5h-4q-2 0-1-1z" fill="#fff" />
      </TaskButton>
      <TaskButton boxed>
        <circle cx="20" cy="20" r="19" fill="#f0790f" />
        <path d="M7 23c1-8 8-13 17-13 6-1 10-1 11 2 2 3 3 8 1 13-1-4-3-5-5-2-1 6-5 11-12 13 4-4 5-8 2-10-3-1-5 2-8 1-2 2-6 0-6-4z" fill="#fbf3ea" />
        <path d="M15 10c5-7 12-7 17-3-6-1-9 1-12 4z" fill="#fff" />
        <path d="M12 20l5-1M12 26l6-1" stroke="#d65d07" strokeWidth="1.500" />
      </TaskButton>
      <TaskButton boxed>
        <rect x="4" y="3" width="18" height="18" fill="#f3f8ff" stroke="#3f78c8" />
        <path d="M4 3h18v4H4z" fill="#4386d8" />
        <rect x="13" y="8" width="20" height="20" fill="#f3f8ff" stroke="#3f78c8" />
        <path d="M13 8h20v3H13z" fill="#4386d8" />
        <path d="M17 21v-5h3v5zm6-3v-4h3v4zm6 5v-6h2v6z" fill="none" stroke="#3565b0" />
        <rect x="25" y="19" width="12" height="13" fill="#f3f8ff" stroke="#3f78c8" />
        <path d="M27 25q3 5 7-2" fill="none" stroke="#3565b0" />
        <path d="M3 35q0-10 8-11 9 1 9 11z" fill="#4fa53c" stroke="#347d2a" />
        <circle cx="11" cy="18" r="5.500" fill="#e58b3c" stroke="#a75a1b" />
      </TaskButton>
      <TaskButton>
        <path d="M14 4l23-1-3 34-9-1z" fill="#e9e5dc" stroke="#a19f98" strokeWidth="0.700" />
        <path d="M14 5L35 4 24 36 2 30z" fill="#8ec9d3" />
        <path d="M14 5L35 4 31 16 9 16z" fill="#c4e5e9" />
        <path d="M14 5h22" stroke="#5f6e73" strokeWidth="3" strokeDasharray="1.500 1.500" />
      </TaskButton>
      <TaskButton>
        <rect width="40" height="40" rx="5" fill="#ea2a0b" />
        <path d="M9 8l11 9.500L31 8M9 32l11-9.500L31 32" fill="none" stroke="#fff3e8" strokeWidth="3" strokeLinecap="round" />
      </TaskButton>
      <TaskButton>
        <rect width="20" height="20" fill="#7fc0ee" />
        <rect x="20" width="20" height="20" fill="#8ccf96" />
        <rect y="20" width="20" height="20" fill="#fbd0a0" />
        <rect x="20" y="20" width="20" height="20" fill="#b9c0bd" />
        <circle cx="20" cy="20" r="16" fill="#f7e4bd" opacity="0.550" />
        <path d="M3 3l17 17" stroke="#c43a55" strokeWidth="6" strokeLinecap="round" />
        <circle cx="21" cy="20" r="5" fill="#e01525" />
      </TaskButton>
      <TaskButton>
        <path d="M10 3q2-3 7 0l20 13q4 3 0 7L17 36q-5 4-7 0z" fill="#2f9bf0" />
        <path d="M1 9q0-4 6-3l6 2v25l-7 2q-4 0-5-4-1-10 0-22z" fill="#f58a1d" />
        <path d="M6 8q2-3 7 0l15 9q3 3 0 6l-15 9q-5 3-7 0z" fill="#6fc21d" />
        <path d="M12 14q0-2 2-1l11 6q1 1 0 2l-11 6q-2 1-2-1z" fill="#fff" />
      </TaskButton>
      <TaskButton boxed>
        <WeChat />
      </TaskButton>
      <TaskButton boxed>
        <rect width="40" height="40" rx="5" fill="#1668f2" />
        <path d="M6.500 8Q20 1 33.500 8Q34 25 20 34.500Q6 25 6.500 8z" fill="none" stroke="#fff" strokeWidth="3" strokeLinejoin="round" />
        <path d="M8 13l12 9 12-9" fill="none" stroke="#fff" strokeWidth="3.500" />
      </TaskButton>
    </>
  )
}

function Tray() {
  const icon = "h-[20px] w-[20px]"
  return (
    <div className="-mt-[2px] flex gap-[10px]">
      <svg className={icon} viewBox="0 0 20 20">
        <path d="M4 1h12v6H4z" fill="#e8f2f7" stroke="#33444d" />
        <path d="M6 3h3v2H6zm5 0h3v2h-3z" fill="#33444d" />
        <path d="M1 7h18v9q0 3-3 3H4q-3 0-3-3z" fill="#2791cd" stroke="#14577f" />
        <path d="M7 9v5q2 2 3 0V9h2q3 2 0 4h-1" fill="none" stroke="#bfe6fa" />
      </svg>
      <svg className={icon} viewBox="0 0 40 40">
        <path d="M3 5Q20-2 37 5Q37 27 20 38Q3 27 3 5z" fill="#fff" />
        <path d="M7 8Q20 3 33 8Q33 25 20 33Q7 25 7 8z" fill="#1c68e8" />
        <path d="M9 12l11 9 11-9v5l-11 10-11-10z" fill="#fff" />
      </svg>
      <svg className={icon} viewBox="0 0 20 20">
        <circle cx="10" cy="10" r="9.500" fill="#e9590c" />
        <path d="M4 4l3 2h6l3-2v5q0 8-6 8T4 9z" fill="#1c1410" />
        <path d="M5 8l4 2H6zM15 8l-4 2h3zM7 13h6" stroke="#e9a55c" fill="#fff" />
      </svg>
      <svg className={icon} viewBox="0 0 40 40"><WeChat /></svg>
      <svg className={icon} viewBox="0 0 20 20">
        <path d="M1 7l11-3 7 2-5 5-8-1z" fill="#59636a" stroke="#aeb9bf" />
        <circle cx="14" cy="13.500" r="4.500" fill="#55a33c" />
        <path d="M12 13.500l1.500 2 3-3.500" fill="none" stroke="#fff" strokeWidth="1.300" />
      </svg>
      <svg className={icon} viewBox="0 0 20 20">
        <path d="M3 17v-3M6.500 17v-5M10 17V9M13.500 17V6M17 17V3" stroke="#2f4a56" strokeWidth="3.600" />
        <path d="M3 16.500v-2M6.500 16.500v-4M10 16.500v-7M13.500 16.500v-10M17 16.500v-13" stroke="#fff" strokeWidth="2.200" />
      </svg>
      <svg className={icon} viewBox="0 0 20 20">
        <path d="M1 6h3l5-5v18l-5-5H1z" fill="#fff" stroke="#44575f" strokeWidth="0.800" />
        <circle cx="14" cy="14" r="4.500" fill="#fff" stroke="#d3131b" strokeWidth="1.800" />
        <path d="M11 11l6 6" stroke="#d3131b" strokeWidth="1.800" />
      </svg>
    </div>
  )
}

function Taskbar() {
  return (
    <div className="relative flex h-[48px] items-center border-t border-[#1f4e63] bg-linear-to-r from-[#4d7d90] from-[3%] via-[#69a9c5] via-[6%] to-[#67a6c2] shadow-[inset_0_1px_0_#9cc6d8]">
      <div className="flex w-[70px] pl-[11px]">
        <StartOrb />
      </div>
      <TaskIcons />
      {/* glass streaks over the empty part of the bar */}
      <div className="h-full flex-1 bg-[linear-gradient(60deg,transparent_10%,#73b1cb_18%,#69a9c5_30%,#62a0bb_40%,#73b1cb_46%,#73b1cb_54%,#65a4bf_60%,transparent_80%)]" />
      <div className="flex h-full items-center bg-linear-to-r from-transparent to-[#54869b] to-[30px] pl-[32px]">
        <Tray />
        <div className="ml-[10px] flex h-full w-[92px] flex-col justify-center bg-linear-to-br from-transparent from-70% to-[#8cab50] to-80% pb-px text-center text-[15.4px] leading-[22px] text-white">
          <div>7:35</div>
          <div>2021/7/28</div>
        </div>
        <div className="h-full w-[15px] border border-[#d0dfae] bg-linear-to-b from-[#a9c0b0] to-[#83a240]" />
      </div>
      <svg className="absolute left-[596px] top-[23px] h-[22px] w-[16px]" viewBox="0 0 16 22">
        <path d="M1 1v17l4-4 3 7 3.500-1.500-3-6.500H14z" fill="#fff" stroke="#000" />
      </svg>
    </div>
  )
}

export default function App() {
  return (
    <div className="h-[985px] w-[1920px] overflow-hidden bg-[#f0f0f0] font-['Open_Sans','Noto_Sans_CJK_SC',sans-serif] leading-none">
      <div className="h-[883px] overflow-hidden bg-[#8f959c] pl-[2px]">
        <div className="-mt-[6px] grid w-[1916px] grid-cols-2 gap-y-px">
          {CHARTS.map((chart) => (
            <ChartWindow key={chart.symbol} chart={chart} />
          ))}
        </div>
      </div>
      <TabBar />
      <StatusBar />
      <Taskbar />
    </div>
  )
}
